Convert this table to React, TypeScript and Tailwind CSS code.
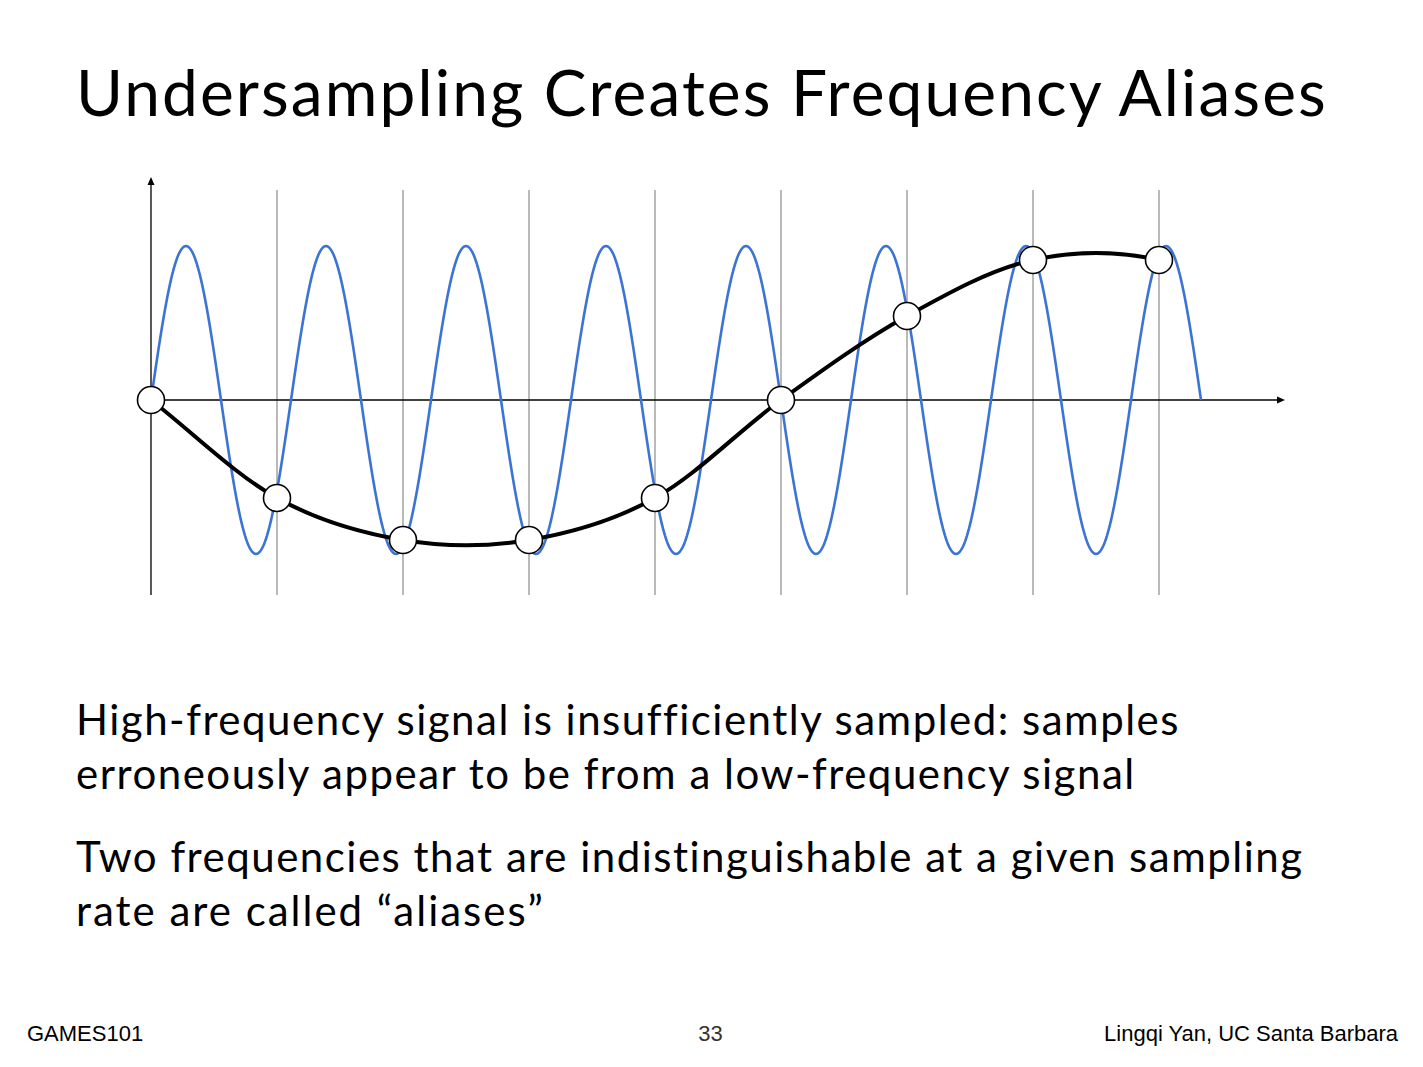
const samples = [
  [151, 400],
  [277, 498],
  [403, 540],
  [529, 540],
  [655, 498],
  [781, 400],
  [907, 316],
  [1033, 260],
  [1159, 260],
];

const gridXs = [277, 403, 529, 655, 781, 907, 1033, 1159];

function sinePath() {
  const pts: string[] = [];
  for (let x = 151; x <= 1201; x += 1) {
    const y = 400 - 154 * Math.sin((2 * Math.PI * (x - 151)) / 140);
    pts.push(`${x},${y.toFixed(2)}`);
  }
  return "M" + pts.join(" L");
}

function aliasPath() {
  const p = samples;
  const first = [2 * p[0][0] - p[1][0], 2 * p[0][1] - p[1][1]];
  const last = [2 * p[p.length - 1][0] - p[p.length - 2][0], 316];
  const all = [first, ...p, last];
  let d = `M${p[0][0]},${p[0][1]}`;
  for (let i = 1; i < all.length - 2; i++) {
    const p0 = all[i - 1], p1 = all[i], p2 = all[i + 1], p3 = all[i + 2];
    const c1 = [p1[0] + (p2[0] - p0[0]) / 6, p1[1] + (p2[1] - p0[1]) / 6];
    const c2 = [p2[0] - (p3[0] - p1[0]) / 6, p2[1] - (p3[1] - p1[1]) / 6];
    d += ` C${c1[0]},${c1[1]} ${c2[0]},${c2[1]} ${p2[0]},${p2[1]}`;
  }
  return d;
}

function Chart() {
  return (
    <svg width="1423" height="440" viewBox="0 170 1423 440" className="block">
      {gridXs.map((x) => (
        <line key={x} x1={x} y1={190} x2={x} y2={595} stroke="#a3a3a3" strokeWidth="1.5" />
      ))}
      <line x1={151} y1={595} x2={151} y2={184} stroke="#000" strokeWidth="1.3" />
      <polygon points="151,177 147.5,185 154.5,185" fill="#000" />
      <line x1={151} y1={400} x2={1278} y2={400} stroke="#000" strokeWidth="1.3" />
      <polygon points="1285,400 1277,396.5 1277,403.5" fill="#000" />
      <path d={sinePath()} fill="none" stroke="#3b74d4" strokeWidth="2.6" />
      <path d={aliasPath()} fill="none" stroke="#000" strokeWidth="4" />
      {samples.map(([x, y]) => (
        <circle key={x} cx={x} cy={y} r="13.5" fill="#fff" stroke="#000" strokeWidth="1.6" />
      ))}
    </svg>
  );
}

export default function App() {
  return (
    <div className="w-[1423px] h-[1067px] bg-white flex flex-col text-black overflow-hidden">
      <h1 className="pl-[76px] pt-[60px] h-[170px] text-[64px] leading-[64px] tracking-[2.1px] font-normal font-['Lato',sans-serif] whitespace-nowrap">
        Undersampling Creates Frequency Aliases
      </h1>

      <Chart />

      <div className="pl-[76px] mt-[82px] text-[42px] leading-[54px] tracking-[1.5px] font-['Lato',sans-serif] flex flex-col gap-[29px] whitespace-nowrap">
        <p>
          <span className="block">High-frequency signal is insufficiently sampled: samples</span>
          <span className="block">erroneously appear to be from a low-frequency signal</span>
        </p>
        <p>
          <span className="block">Two frequencies that are indistinguishable at a given sampling</span>
          <span className="block tracking-[2px]">rate are called “aliases”</span>
        </p>
      </div>

      <div className="mt-auto pb-[22px] grid grid-cols-[1fr_auto_1fr] items-end text-[22px] leading-[22px] font-['Liberation_Sans',Arial,sans-serif]">
        <span className="pl-[27px]">GAMES101</span>
        <span className="text-[#333] pr-[2px]">33</span>
        <span className="pr-[25px] text-right">Lingqi Yan, UC Santa Barbara</span>
      </div>
    </div>
  );
}
